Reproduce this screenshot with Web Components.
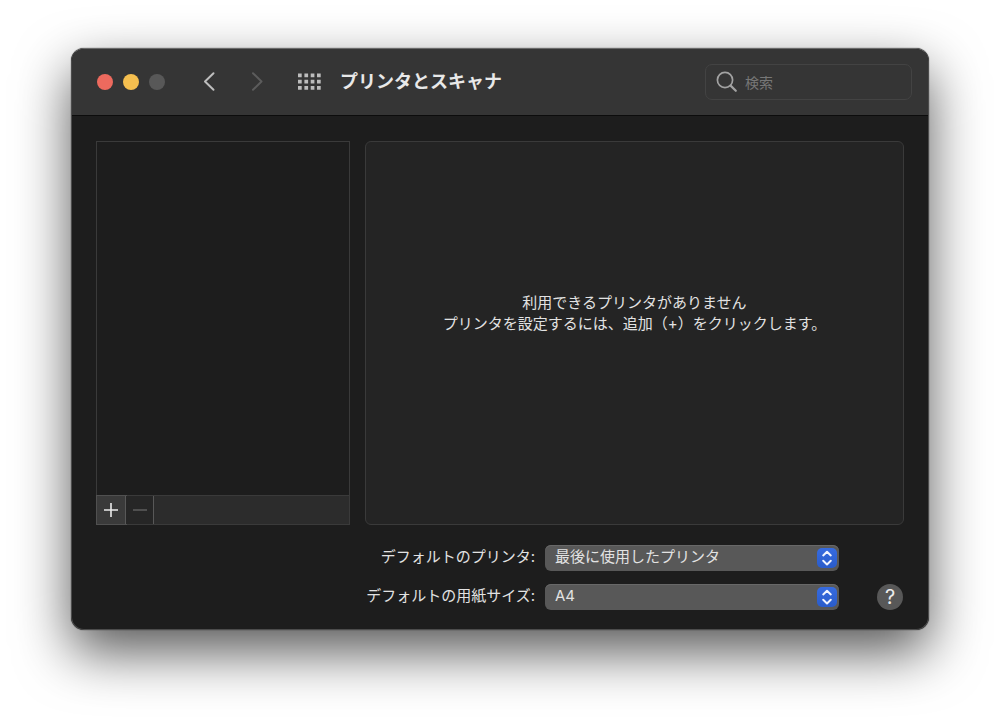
<!DOCTYPE html>
<html lang="ja">
<head>
<meta charset="utf-8">
<title>プリンタとスキャナ</title>
<style>
  body {
    margin: 0;
    height: 100vh;
    box-sizing: border-box;
    padding: 48px 71px 95px;
    display: flex;
    background: #fff;
    color: #e2e2e2;
    font: 15px/21px Inter, "Noto Sans CJK JP", sans-serif;
    --line: #3a3a3a;
    --control: #585858;
  }
</style>
</head>
<body>

<pref-window>
  <window-toolbar slot="toolbar">プリンタとスキャナ</window-toolbar>
  <printer-list></printer-list>
  <printer-detail>利用できるプリンタがありません<br>プリンタを設定するには、追加（+）をクリックします。</printer-detail>
  <popup-row slot="settings" value="最後に使用したプリンタ">デフォルトのプリンタ:</popup-row>
  <popup-row slot="settings" value="A4">デフォルトの用紙サイズ:</popup-row>
  <help-button slot="help"></help-button>
</pref-window>

<script>
class PrefWindow extends HTMLElement {
  constructor() {
    super();
    this.attachShadow({ mode: 'open' });
    this.shadowRoot.innerHTML = `
      <style>
        :host {
          flex: 1;
          display: flex;
          flex-direction: column;
          box-sizing: border-box;
          overflow: hidden;
          background: #1d1d1d;
          border: 1px solid #4c4c4c;
          border-top-color: #6a6a6a;
          border-radius: 13px;
          box-shadow: 0 0 1px #000, 0 22px 54px rgba(0, 0, 0, 0.66);
        }
        main {
          flex: 1;
          display: flex;
          flex-direction: column;
          gap: 20px;
          padding: 25px 24px 19px;
        }
        .panes {
          flex: 1;
          display: flex;
          gap: 15px;
        }
        .footer {
          display: flex;
          align-items: flex-end;
          gap: 38px;
          padding-right: 1px;
        }
        .settings {
          flex: 1;
          display: flex;
          flex-direction: column;
          gap: 13px;
        }
      </style>
      <slot name="toolbar"></slot>
      <main>
        <div class="panes"><slot></slot></div>
        <div class="footer">
          <div class="settings"><slot name="settings"></slot></div>
          <slot name="help"></slot>
        </div>
      </main>
    `;
  }
}

class WindowToolbar extends HTMLElement {
  constructor() {
    super();
    this.attachShadow({ mode: 'open' });
    this.shadowRoot.innerHTML = `
      <style>
        :host {
          display: flex;
          align-items: center;
          height: 66px;
          padding: 0 16px 0 25px;
          background: #353535;
          border-bottom: 1px solid #0c0c0c;
        }
        button {
          border: none;
          padding: 0;
          background: none;
          color: #bdbdbd;
        }
        svg {
          display: block;
        }
        .lights {
          display: flex;
          gap: 10px;
          margin-right: 29px;
        }
        .lights button {
          width: 16px;
          height: 16px;
          border-radius: 50%;
        }
        .close { background: #ed6a5e; }
        .minimize { background: #f5bf4f; }
        .zoom { background: #585858; }
        .nav {
          display: flex;
          gap: 15px;
          margin-right: 25px;
        }
        .nav button:disabled {
          color: #5c5c5c;
        }
        h1 {
          flex: 1;
          margin: 0 0 0 18px;
          color: #e8e8e8;
          font-size: 18px;
          line-height: 26px;
          font-weight: bold;
        }
      </style>
      <div class="lights">
        <button class="close" aria-label="閉じる"></button>
        <button class="minimize" aria-label="しまう"></button>
        <button class="zoom" aria-label="拡大" disabled></button>
      </div>
      <div class="nav">
        <button aria-label="戻る">
          <svg width="32" height="24" viewBox="0 0 32 24" fill="none" stroke="currentColor" stroke-width="2" stroke-linecap="round" stroke-linejoin="round">
            <path d="M19.500 3.200 11 11.500l8.500 8.300"/>
          </svg>
        </button>
        <button aria-label="進む" disabled>
          <svg width="32" height="24" viewBox="0 0 32 24" fill="none" stroke="currentColor" stroke-width="2" stroke-linecap="round" stroke-linejoin="round">
            <path d="M12 3.200l8.500 8.300L12 19.800"/>
          </svg>
        </button>
      </div>
      <button aria-label="すべてを表示">
        <svg width="24" height="18" viewBox="0 0 24 18" fill="currentColor">
          <path d="M0 .5h3.700v3.700H0zM6.400 .5h3.700v3.700H6.400zM12.700 .5h3.700v3.700h-3.700zM19 .5h3.700v3.700H19zM0 6.800h3.700v3.700H0zM6.400 6.800h3.700v3.700H6.400zM12.700 6.800h3.700v3.700h-3.700zM19 6.800h3.700v3.700H19zM0 13.100h3.700v3.700H0zM6.400 13.100h3.700v3.700H6.400zM12.700 13.100h3.700v3.700h-3.700zM19 13.100h3.700v3.700H19z"/>
        </svg>
      </button>
      <h1><slot></slot></h1>
      <search-field></search-field>
    `;
  }
}

class SearchField extends HTMLElement {
  constructor() {
    super();
    this.attachShadow({ mode: 'open' });
    this.shadowRoot.innerHTML = `
      <style>
        :host {
          display: block;
          width: 207px;
        }
        label {
          display: flex;
          align-items: center;
          gap: 7px;
          box-sizing: border-box;
          height: 36px;
          padding: 0 10px;
          border: 1px solid #434343;
          border-radius: 7px;
          color: #a2a2a2;
        }
        svg {
          flex: none;
        }
        input {
          flex: 1;
          min-width: 0;
          border: none;
          outline: none;
          padding: 0;
          background: none;
          color: #e2e2e2;
          font: inherit;
          font-size: 14px;
        }
        input::placeholder {
          color: #777;
        }
      </style>
      <label>
        <svg width="22" height="22" viewBox="0 0 22 22" fill="none" stroke="currentColor" stroke-linecap="round">
          <circle cx="9" cy="9" r="7.600" stroke-width="1.700"/>
          <path d="M14.600 14.600l5.200 5.200" stroke-width="2.200"/>
        </svg>
        <input type="search" placeholder="検索" aria-label="検索">
      </label>
    `;
  }
}

class PrinterList extends HTMLElement {
  constructor() {
    super();
    this.attachShadow({ mode: 'open' });
    this.shadowRoot.innerHTML = `
      <style>
        :host {
          width: 254px;
          box-sizing: border-box;
          display: flex;
          flex-direction: column;
          border: 1px solid var(--line);
        }
        .items {
          flex: 1;
        }
        .bar {
          display: flex;
          height: 28px;
          border-top: 1px solid var(--line);
          background: #2c2c2c;
        }
        button {
          box-sizing: border-box;
          width: 28px;
          padding: 0;
          border: none;
          border-right: 1px solid #585858;
          background: #262626;
          color: #5a5a5a;
        }
        .add {
          width: 29px;
          background: #3a3a3a;
          outline: 1px solid #505050;
          color: #ececec;
        }
        svg {
          display: block;
          margin: auto;
        }
      </style>
      <div class="items"></div>
      <div class="bar">
        <button class="add" aria-label="追加">
          <svg width="14" height="14" viewBox="0 0 14 14" stroke="currentColor" stroke-width="1.600"><path d="M7 0v14M0 7h14"/></svg>
        </button>
        <button aria-label="削除" disabled>
          <svg width="14" height="14" viewBox="0 0 14 14" stroke="currentColor" stroke-width="1.600"><path d="M0 7h14"/></svg>
        </button>
      </div>
    `;
  }
}

class PrinterDetail extends HTMLElement {
  constructor() {
    super();
    this.attachShadow({ mode: 'open' });
    this.shadowRoot.innerHTML = `
      <style>
        :host {
          flex: 1;
          box-sizing: border-box;
          display: flex;
          align-items: center;
          justify-content: center;
          padding-bottom: 40px;
          border: 1px solid var(--line);
          border-radius: 6px;
          background: #242424;
          text-align: center;
        }
        p {
          margin: 0;
        }
      </style>
      <p><slot></slot></p>
    `;
  }
}

class PopupRow extends HTMLElement {
  constructor() {
    super();
    this.attachShadow({ mode: 'open' });
    this.shadowRoot.innerHTML = `
      <style>
        :host {
          display: flex;
          gap: 10px;
          line-height: 24px;
        }
        label {
          flex: 1;
          text-align: right;
        }
        .popup {
          position: relative;
          width: 294px;
          height: 26px;
        }
        select {
          appearance: none;
          display: block;
          width: 100%;
          height: 100%;
          border: none;
          border-radius: 6px;
          padding: 0 28px 2px 10px;
          background: var(--control);
          box-shadow: inset 0 1px #686868;
          color: inherit;
          font: inherit;
        }
        svg {
          position: absolute;
          top: 3px;
          right: 2px;
          border-radius: 5px;
          background: linear-gradient(#366be0, #2a5cca);
          pointer-events: none;
        }
      </style>
      <label for="popup"><slot></slot></label>
      <div class="popup">
        <select id="popup"><option></option></select>
        <svg width="20" height="20" viewBox="0 0 20 20" fill="none" stroke="#f0f4ff" stroke-width="2" stroke-linecap="round" stroke-linejoin="round">
          <path d="M6.200 7.400l3.800-3.600 3.800 3.600M6.200 12.800l3.800 3.600 3.800-3.600"/>
        </svg>
      </div>
    `;
  }

  connectedCallback() {
    this.shadowRoot.querySelector('option').textContent = this.getAttribute('value');
  }
}

class HelpButton extends HTMLElement {
  constructor() {
    super();
    this.attachShadow({ mode: 'open' });
    this.shadowRoot.innerHTML = `
      <style>
        :host {
          display: block;
        }
        button {
          display: block;
          width: 26px;
          height: 26px;
          padding: 0;
          border: none;
          border-radius: 50%;
          background: var(--control);
          color: #ececec;
          font: 20px/26px Inter, "Liberation Sans", sans-serif;
        }
      </style>
      <button aria-label="ヘルプ">?</button>
    `;
  }
}

customElements.define('pref-window', PrefWindow);
customElements.define('search-field', SearchField);
customElements.define('window-toolbar', WindowToolbar);
customElements.define('printer-list', PrinterList);
customElements.define('printer-detail', PrinterDetail);
customElements.define('popup-row', PopupRow);
customElements.define('help-button', HelpButton);
</script>
</body>
</html>
